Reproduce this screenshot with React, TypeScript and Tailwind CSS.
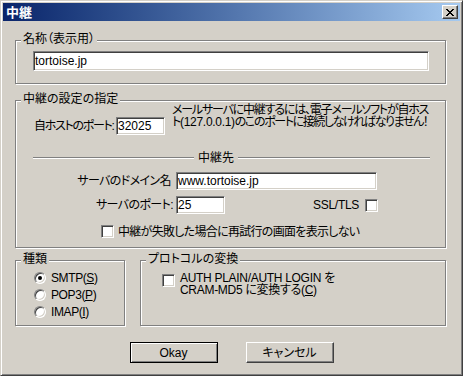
import React from "react";

const sunken =
  "bg-white border border-t-[#808080] border-l-[#808080] border-r-white border-b-white shadow-[inset_1px_1px_0_#404040,inset_-1px_-1px_0_#d4d0c8]";

function Group({ label, className, children }: { label: string; className: string; children?: React.ReactNode }) {
  return (
    <div className={`relative border border-[#808080] shadow-[1px_1px_0_#fff,inset_1px_1px_0_#fff] ${className}`}>
      <span className="absolute -top-[8px] left-[5px] px-[2px] bg-[#d4d0c8] leading-[13px] whitespace-nowrap">{label}</span>
      {children}
    </div>
  );
}

function Field({ className, value }: { className: string; value: string }) {
  return (
    <div className={`${sunken} ${className} flex items-center pl-[1px] whitespace-nowrap overflow-hidden`}>{value}</div>
  );
}

function Check() {
  return <span className={`${sunken} block w-[13px] h-[13px] shrink-0`} />;
}

function Radio({ checked }: { checked?: boolean }) {
  return (
    <span className="w-[12px] h-[12px] shrink-0 rounded-full bg-white border border-t-[#808080] border-l-[#808080] border-r-white border-b-white shadow-[inset_1px_1px_0_#404040,inset_-1px_-1px_0_#d4d0c8] flex items-center justify-center">
      {checked && <span className="block w-[4px] h-[4px] rounded-full bg-black" />}
    </span>
  );
}

function CloseGlyph() {
  const px: [number, number][] = [
    [0, 0], [1, 0], [6, 0], [7, 0],
    [1, 1], [2, 1], [5, 1], [6, 1],
    [2, 2], [3, 2], [4, 2], [5, 2],
    [3, 3], [4, 3],
    [2, 4], [3, 4], [4, 4], [5, 4],
    [1, 5], [2, 5], [5, 5], [6, 5],
    [0, 6], [1, 6], [6, 6], [7, 6],
  ];
  return (
    <svg width="8" height="7" viewBox="0 0 8 7" shapeRendering="crispEdges">
      {px.map(([x, y]) => (
        <rect key={`${x}-${y}`} x={x} y={y} width="1" height="1" fill="#000" />
      ))}
    </svg>
  );
}

export default function App() {
  return (
    <div className="w-[463px] h-[376px] bg-[#d4d0c8] border border-t-[#d4d0c8] border-l-[#d4d0c8] border-r-[#404040] border-b-[#404040] shadow-[inset_1px_1px_0_#fff,inset_-1px_-1px_0_#808080] p-[2px] flex flex-col text-[12px] leading-[12px] text-black font-['Liberation_Sans','Noto_Sans_CJK_JP',sans-serif] [font-feature-settings:'palt']">
      {/* Title bar */}
      <div className="h-[18px] shrink-0 flex items-center justify-between pl-[3px] pr-[2px] bg-linear-to-r from-[#0a246a] to-[#a6caf0]">
        <span className="text-white font-bold text-[13px] leading-[13px]">中継</span>
        <div className="w-[16px] h-[14px] bg-[#d4d0c8] border border-t-white border-l-white border-r-[#404040] border-b-[#404040] shadow-[inset_-1px_-1px_0_#808080] flex items-center justify-center">
          <CloseGlyph />
        </div>
      </div>

      <div className="flex flex-col pl-[12px]">
        {/* Group 1 */}
        <Group label="名称（表示用）" className="mt-[19px] w-[431px] h-[44px] pl-[17px] pt-[10px]">
          <Field className="w-[396px] h-[20px]" value="tortoise.jp" />
        </Group>

        {/* Group 2 */}
        <Group label="中継の設定の指定" className="mt-[16px] w-[431px] h-[148px] flex flex-col">
          <div className="flex items-start pl-[18px] pt-[3px]">
            <div className="flex items-center mt-[13px]">
              <span className="w-[82px] pr-[2px] whitespace-nowrap tracking-[-1.3px]">自ホストのポート:</span>
              <Field className="w-[49px] h-[18px]" value="32025" />
            </div>
            <div className="ml-[7px] whitespace-nowrap leading-[12px] tracking-[-1.2px]">
              メールサーバに中継するには、電子メールソフトが自ホス
              <br />
              ト<span className="tracking-[-0.3px]">(127.0.0.1)</span><span className="tracking-[-1.4px]">のこのポートに接続しなければなりません！</span>
            </div>
          </div>

          <div className="flex items-center pl-[17px] mt-[17px] h-[12px]">
            <span className="block w-[161px] h-[2px] border-t border-t-[#808080] border-b border-b-white" />
            <span className="mx-[4px] whitespace-nowrap">中継先</span>
            <span className="block w-[192px] h-[2px] border-t border-t-[#808080] border-b border-b-white" />
          </div>

          <div className="flex items-center mt-[8px]">
            <span className="w-[160px] text-right pr-[5px] whitespace-nowrap tracking-[-0.6px]">サーバのドメイン名</span>
            <Field className="w-[201px] h-[18px]" value="www.tortoise.jp" />
          </div>

          <div className="flex items-center mt-[6px]">
            <span className="w-[160px] text-right pr-[3px] whitespace-nowrap tracking-[-0.6px]">サーバのポート:</span>
            <Field className="w-[49px] h-[18px]" value="25" />
            <div className="w-[153px] flex items-center justify-end gap-[6px]">
              <span className="tracking-[-0.3px]">SSL/TLS</span>
              <Check />
            </div>
          </div>

          <div className="flex items-center pl-[85px] mt-[11px]">
            <Check />
            <span className="ml-[4px] whitespace-nowrap tracking-[-0.7px]">中継が失敗した場合に再試行の画面を表示しない</span>
          </div>
        </Group>

        {/* Bottom groups */}
        <div className="flex mt-[12px]">
          <Group label="種類" className="w-[110px] h-[66px] pl-[18px] pt-[8px] flex flex-col">
            <div className="flex items-center h-[17px]">
              <Radio checked />
              <span className="ml-[5px] tracking-[-0.4px]">SMTP(<span className="underline">S</span>)</span>
            </div>
            <div className="flex items-center h-[17px]">
              <Radio />
              <span className="ml-[5px] tracking-[-0.4px]">POP3(<span className="underline">P</span>)</span>
            </div>
            <div className="flex items-center h-[17px]">
              <Radio />
              <span className="ml-[5px] tracking-[-0.4px]">IMAP(<span className="underline">I</span>)</span>
            </div>
          </Group>

          <Group label="プロトコルの変換" className="ml-[15px] w-[306px] h-[66px] pl-[21px] pt-[11px]">
            <div className="flex items-start">
              <span className="mt-[2px]">
                <Check />
              </span>
              <div className="ml-[5px] whitespace-nowrap leading-[12px] tracking-[-0.3px]">
                AUTH PLAIN/AUTH LOGIN を
                <br />
                CRAM-MD5 に変換する(<span className="underline">C</span>)
              </div>
            </div>
          </Group>
        </div>
      </div>

      {/* Buttons */}
      <div className="flex justify-center gap-[28px] mt-[16px]">
        <button className="w-[88px] h-[21px] bg-[#d4d0c8] border border-black shadow-[inset_1px_1px_0_#fff,inset_-1px_-1px_0_#808080] flex items-center justify-center">
          Okay
        </button>
        <button className="w-[88px] h-[21px] bg-[#d4d0c8] border border-t-white border-l-white border-r-[#404040] border-b-[#404040] shadow-[inset_-1px_-1px_0_#808080] flex items-center justify-center">
          キャンセル
        </button>
      </div>
    </div>
  );
}
